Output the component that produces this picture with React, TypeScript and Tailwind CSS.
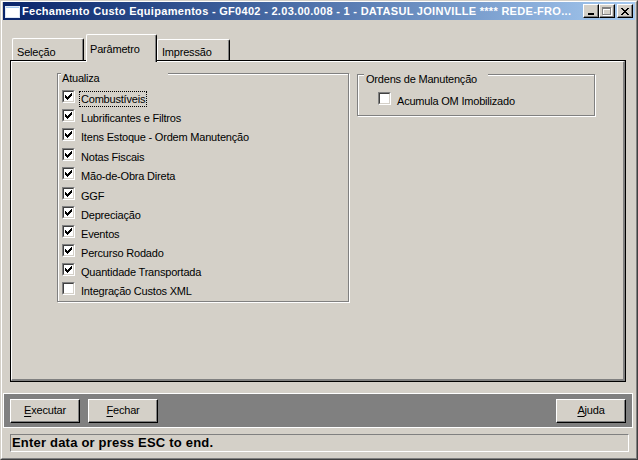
import React from "react";

const FONT = "font-['Liberation_Sans',Arial,sans-serif]";

function Check({ checked }: { checked: boolean }) {
  return (
    <span className="block w-[13px] h-[13px] shrink-0 border border-t-[#808080] border-l-[#808080] border-r-white border-b-white">
      <span className="block w-full h-full bg-white border border-t-[#404040] border-l-[#404040] border-r-[#d4d0c8] border-b-[#d4d0c8]">
        {checked && (
          <svg width="9" height="9" viewBox="0 0 9 9" className="block" shapeRendering="crispEdges">
            <rect x="1" y="3" width="1" height="3" fill="#000" />
            <rect x="2" y="4" width="1" height="3" fill="#000" />
            <rect x="3" y="5" width="1" height="3" fill="#000" />
            <rect x="4" y="4" width="1" height="3" fill="#000" />
            <rect x="5" y="3" width="1" height="3" fill="#000" />
            <rect x="6" y="2" width="1" height="3" fill="#000" />
            <rect x="7" y="1" width="1" height="3" fill="#000" />
          </svg>
        )}
      </span>
    </span>
  );
}

function CheckRow({ label, checked, focus, tall }: { label: string; checked: boolean; focus?: boolean; tall?: boolean }) {
  return (
    <div className={tall ? "flex items-start h-[20px]" : "flex items-start h-[19px]"}>
      <span className="mt-[3px]">
        <Check checked={checked} />
      </span>
      <span
        className={
          focus
            ? "ml-[4px] mt-[4px] h-[16px] px-[1px] leading-[14px] border border-dotted border-black whitespace-nowrap"
            : "ml-[4px] mt-[4px] h-[16px] px-[1px] leading-[14px] border border-transparent whitespace-nowrap"
        }
      >
        {label}
      </span>
    </div>
  );
}

function CaptionButton({ children }: { children: React.ReactNode }) {
  return (
    <div className="w-[16px] h-[14px] bg-[#d4d0c8] border border-t-white border-l-white border-r-black border-b-black shadow-[inset_-1px_-1px_0_#808080] flex items-center justify-center">
      {children}
    </div>
  );
}

function Button({ first, rest }: { first: string; rest: string }) {
  return (
    <div className="w-[70px] h-[24px] bg-[#d4d0c8] border border-t-white border-l-white border-r-black border-b-black shadow-[inset_-1px_-1px_0_#808080] flex items-center justify-center text-[11px] tracking-[-0.2px] text-black leading-none">
      <span>
        <span className="underline underline-offset-[2px]">{first}</span>
        {rest}
      </span>
    </div>
  );
}

const items: { label: string; checked: boolean; tall?: boolean; focus?: boolean }[] = [
  { label: "Combustíveis", checked: true, focus: true },
  { label: "Lubrificantes e Filtros", checked: true },
  { label: "Itens Estoque - Ordem Manutenção", checked: true, tall: true },
  { label: "Notas Fiscais", checked: true },
  { label: "Mão-de-Obra Direta", checked: true, tall: true },
  { label: "GGF", checked: true },
  { label: "Depreciação", checked: true },
  { label: "Eventos", checked: true },
  { label: "Percurso Rodado", checked: true },
  { label: "Quantidade Transportada", checked: true },
  { label: "Integração Custos XML", checked: false },
];

export default function App() {
  return (
    <div className={`${FONT} w-[638px] h-[460px] bg-[#d4d0c8] border border-t-[#d4d0c8] border-l-[#d4d0c8] border-r-[#404040] border-b-[#404040] overflow-hidden`}>
      <div className="w-full h-full border border-t-white border-l-white border-r-[#808080] border-b-[#808080] px-px flex flex-col">
        {/* Caption */}
        <div className="h-[18px] shrink-0 bg-linear-to-r from-[#0a246a] to-[#a6caf0] flex items-center pl-[1px] pr-[2px]">
          <svg width="16" height="16" viewBox="0 0 16 16" className="shrink-0" shapeRendering="crispEdges">
            <rect x="1" y="3" width="14" height="11" fill="#ffffff" />
            <rect x="1" y="3" width="14" height="2" fill="#a6caf0" />
            <rect x="1" y="3" width="14" height="11" fill="none" stroke="#dfe8f5" strokeWidth="1" />
          </svg>
          <span className="ml-[2px] text-white font-bold text-[11px] tracking-[0.3px] leading-none whitespace-nowrap">
            Fechamento Custo Equipamentos - GF0402 - 2.03.00.008 - 1 - DATASUL JOINVILLE **** REDE-FRO...
          </span>
          <div className="ml-auto flex items-center">
            <CaptionButton>
              <svg width="8" height="7" viewBox="0 0 8 7" shapeRendering="crispEdges">
                <rect x="1" y="5" width="6" height="2" fill="#000" />
              </svg>
            </CaptionButton>
            <CaptionButton>
              <svg width="10" height="9" viewBox="0 0 10 9" shapeRendering="crispEdges">
                <rect x="1.5" y="1.5" width="8" height="7" fill="none" stroke="#ffffff" />
                <rect x="1" y="1" width="8" height="2" fill="#ffffff" />
                <rect x="0.5" y="0.5" width="8" height="7" fill="none" stroke="#808080" />
                <rect x="0" y="0" width="9" height="2" fill="#808080" />
              </svg>
            </CaptionButton>
            <div className="ml-[2px]">
              <CaptionButton>
                <svg width="8" height="7" viewBox="0 0 8 7" shapeRendering="crispEdges">
                  <path d="M0 0h2v1h-2zM6 0h2v1h-2zM1 1h2v1h-2zM5 1h2v1h-2zM2 2h4v1h-4zM3 3h2v1h-2zM2 4h4v1h-4zM1 5h2v1h-2zM5 5h2v1h-2zM0 6h2v1h-2zM6 6h2v1h-2z" fill="#000" />
                </svg>
              </CaptionButton>
            </div>
          </div>
        </div>

        {/* Tabs + panel */}
        <div className="ml-[7px] mt-[14px] w-[616px] text-[11px] tracking-[-0.2px] text-black">
          <div className="flex items-end h-[26px] pl-[2px]">
            <div className="w-[72px] h-[22px] bg-[#d4d0c8] border-t border-l border-r border-t-white border-l-white border-r-black shadow-[inset_-1px_0_0_#808080] rounded-t-[2px] pl-[4px] pt-[6px] leading-[14px]">
              Seleção
            </div>
            <div className="ml-[2px] w-[71px] h-[28px] -mb-[2px] relative z-10 bg-[#d4d0c8] border-t border-l border-r border-t-white border-l-white border-r-black shadow-[inset_-1px_0_0_#808080] rounded-t-[2px] pl-[3px] pt-[7px] leading-[14px]">
              Parâmetro
            </div>
            <div className="w-[73px] h-[21px] bg-[#d4d0c8] border-t border-l border-r border-t-white border-l-white border-r-black shadow-[inset_-1px_0_0_#808080] rounded-t-[2px] pl-[4px] pt-[5px] leading-[14px]">
              Impressão
            </div>
          </div>
          <div className="h-[322px] border border-black">
            <div className="h-full border-t border-l border-t-white border-l-white border-r-2 border-b-2 border-r-[#808080] border-b-[#808080] pl-[45px] pt-[11px] flex items-start gap-[8px]">
              {/* Atualiza */}
              <div className="relative w-[292px] h-[229px] border border-[#808080] shadow-[inset_1px_1px_0_#fff,1px_1px_0_#fff] pl-[4px] pt-[13px]">
                <span className="absolute -top-[2px] left-[3px] w-[107px] h-[13px] bg-[#d4d0c8] pl-[1px] leading-[13px]">
                  Atualiza
                </span>
                {items.map((it) => (
                  <CheckRow key={it.label} label={it.label} checked={it.checked} focus={it.focus} tall={it.tall} />
                ))}
              </div>
              {/* Ordens */}
              <div className="relative mt-[1px] w-[238px] h-[42px] border border-[#808080] shadow-[inset_1px_1px_0_#fff,1px_1px_0_#fff] pl-[20px] pt-[14px]">
                <span className="absolute -top-[2px] left-[6px] w-[124px] h-[13px] bg-[#d4d0c8] pl-[2px] leading-[13px] whitespace-nowrap">
                  Ordens de Manutenção
                </span>
                <CheckRow label="Acumula OM Imobilizado" checked={false} />
              </div>
            </div>
          </div>
        </div>

        {/* Button bar */}
        <div className="mt-[11px] mr-[2px] h-[35px] border border-white bg-[#808080] flex items-center px-[6px] gap-[8px]">
          <Button first="E" rest="xecutar" />
          <Button first="F" rest="echar" />
          <div className="ml-auto">
            <Button first="A" rest="juda" />
          </div>
        </div>

        {/* Status */}
        <div className="mt-[6px] ml-[7px] w-[619px] h-[18px] border border-t-[#808080] border-l-[#808080] border-r-white border-b-white pl-[1px] text-[13px] tracking-[0.2px] font-bold leading-[16px] text-black whitespace-nowrap">
          Enter data or press ESC to end.
        </div>
      </div>
    </div>
  );
}
